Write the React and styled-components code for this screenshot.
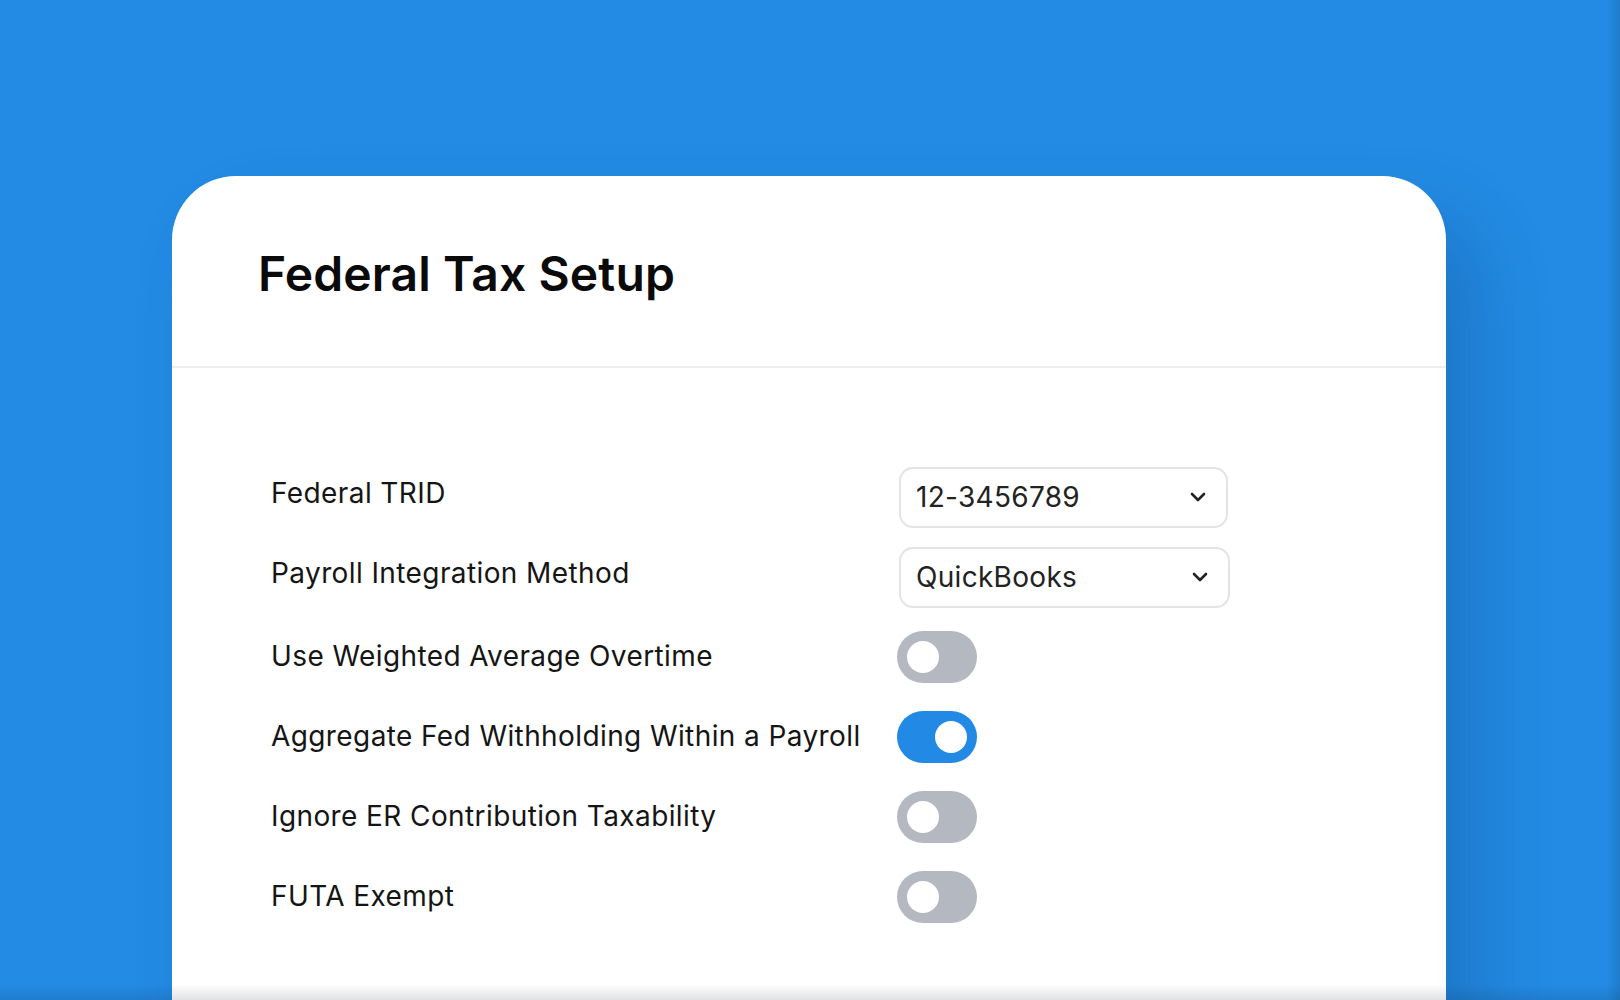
import React from "react"
import styled, { createGlobalStyle } from "styled-components"

const GlobalStyle = createGlobalStyle`
  html, body {
    margin: 0;
    padding: 0;
    height: 100%;
    overflow: hidden;
  }
  body {
    background: linear-gradient(to right, #238be4 0%, #238be4 99.2%, #1e7ccb 100%);
    font-family: Inter, "Noto Sans", sans-serif;
    -webkit-font-smoothing: antialiased;
  }
`

const Page = styled.div`
  position: relative;
  height: 1000px;
  padding: 176px 0 0 172px;
  box-sizing: border-box;
  overflow: hidden;
`

const Card = styled.section`
  width: 1274px;
  height: 900px;
  background: #ffffff;
  border-radius: 64px 64px 0 0;
  box-shadow: 34px 40px 70px rgba(10, 50, 100, 0.22);
`

const Header = styled.header`
  height: 192px;
  box-sizing: border-box;
  padding: 68px 0 0 86px;
  border-bottom: 2px solid #eeeeee;
`

const Title = styled.h1`
  margin: 0;
  font-size: 48px;
  font-weight: 600;
  color: #0a0a0a;
  letter-spacing: 0.1px;
`

const Body = styled.div`
  padding: 89px 0 0 99px;
  display: flex;
  flex-direction: column;
`

const Row = styled.div`
  display: grid;
  grid-template-columns: 628px auto;
  align-items: center;
  height: 80px;
`

const Label = styled.span`
  font-size: 28px;
  letter-spacing: 0.4px;
  color: #151515;
  margin-top: ${p => (p.$raised ? "-8px" : "-3px")};
`

const Select = styled.div`
  width: ${p => p.$width || 330}px;
  height: 61px;
  box-sizing: border-box;
  border: 2px solid #e4e4e4;
  border-radius: 14px;
  display: flex;
  align-items: center;
  justify-content: space-between;
  padding: 0 20px 0 15px;
  font-size: 28px;
  letter-spacing: 0.3px;
  color: #222222;
`

const Toggle = styled.div`
  width: 80px;
  height: 52px;
  margin-left: -2px;
  border-radius: 26px;
  background: ${p => (p.$on ? "#2289e4" : "#b4b9c1")};
  display: flex;
  align-items: center;
  justify-content: ${p => (p.$on ? "flex-end" : "flex-start")};
  padding: 0 10px;
  box-sizing: border-box;
`

const Knob = styled.span`
  width: 32px;
  height: 32px;
  border-radius: 50%;
  background: #ffffff;
`

const BottomFade = styled.div`
  position: absolute;
  left: 0;
  right: 0;
  bottom: 0;
  height: 16px;
  background: linear-gradient(to bottom, rgba(0, 0, 0, 0), rgba(20, 30, 50, 0.13));
  pointer-events: none;
`

function Chevron() {
  return (
    <svg width="16" height="10" viewBox="0 0 16 10" fill="none">
      <path
        d="M2 2l6 6 6-6"
        stroke="#222"
        strokeWidth="2.6"
        strokeLinecap="round"
        strokeLinejoin="round"
      />
    </svg>
  )
}

const toggles = [
  { label: "Use Weighted Average Overtime", on: false },
  { label: "Aggregate Fed Withholding Within a Payroll", on: true },
  { label: "Ignore ER Contribution Taxability", on: false },
  { label: "FUTA Exempt", on: false },
]

export default function App() {
  return (
    <Page>
      <GlobalStyle />
      <Card>
        <Header>
          <Title>Federal Tax Setup</Title>
        </Header>
        <Body>
          <Row>
            <Label $raised>Federal TRID</Label>
            <Select $width={329}>
              <span>12-3456789</span>
              <Chevron />
            </Select>
          </Row>
          <Row>
            <Label $raised>Payroll Integration Method</Label>
            <Select $width={331}>
              <span>QuickBooks</span>
              <Chevron />
            </Select>
          </Row>
          {toggles.map(t => (
            <Row key={t.label}>
              <Label>{t.label}</Label>
              <Toggle $on={t.on}>
                <Knob />
              </Toggle>
            </Row>
          ))}
        </Body>
      </Card>
      <BottomFade />
    </Page>
  )
}
